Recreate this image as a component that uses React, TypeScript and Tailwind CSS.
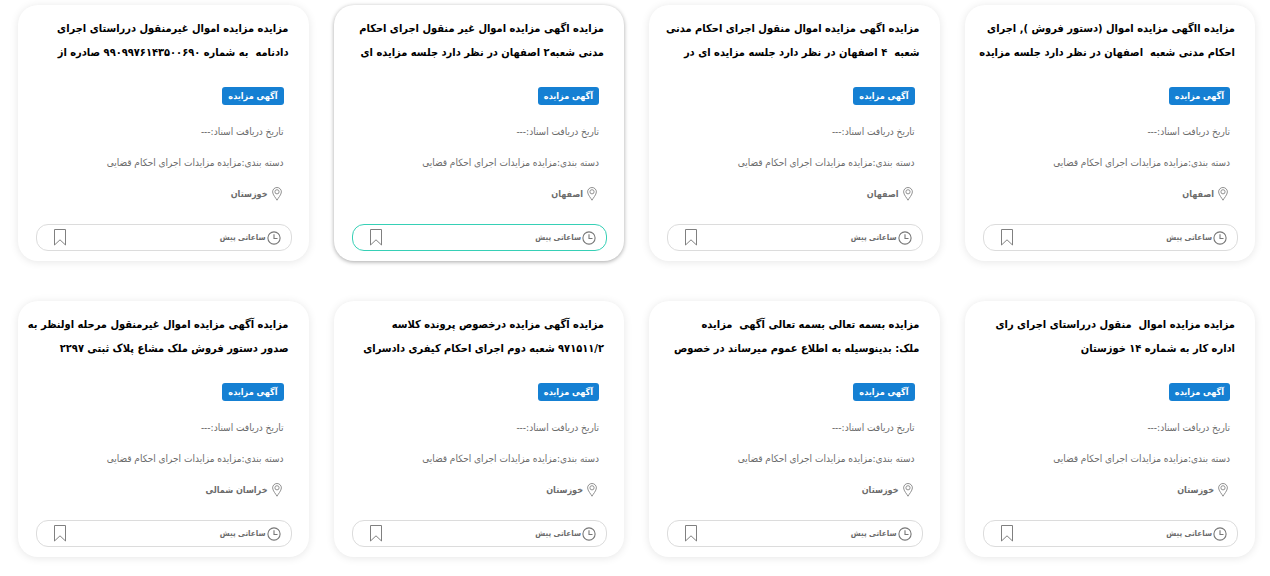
type Auction = {
  title: [string, string];
  place: string;
  active?: boolean;
};

const auctions: Auction[] = [
  { title: ["مزایده ااگهی مزایده اموال (دستور فروش ), اجرای", "احکام مدنی شعبه  اصفهان در نظر دارد جلسه مزایده"], place: "اصفهان" },
  { title: ["مزایده اگهی مزایده اموال منقول اجرای احکام مدنی", "شعبه  ۴ اصفهان در نظر دارد جلسه مزایده ای در"], place: "اصفهان" },
  { title: ["مزایده اگهی مزایده اموال غیر منقول اجرای احکام", "مدنی شعبه۲ اصفهان در نظر دارد جلسه مزایده ای"], place: "اصفهان", active: true },
  { title: ["مزایده مزایده اموال غیرمنقول درراستای اجرای", "دادنامه  به شماره ۹۹۰۹۹۷۶۱۴۳۵۰۰۶۹۰ صادره از"], place: "خوزستان" },
  { title: ["مزایده مزایده اموال  منقول درراستای اجرای رای", "اداره کار به شماره ۱۴ خوزستان"], place: "خوزستان" },
  { title: ["مزایده بسمه تعالی بسمه تعالی آگهی  مزایده", "ملک: بدینوسیله به اطلاع عموم میرساند در خصوص"], place: "خوزستان" },
  { title: ["مزایده آگهی مزایده درخصوص پرونده کلاسه", "۹۷۱۵۱۱/۲ شعبه دوم اجرای احکام کیفری دادسرای"], place: "خوزستان" },
  { title: ["مزایده آگهی مزایده اموال غیرمنقول مرحله اولنظر به", "صدور دستور فروش ملک مشاع پلاک ثبتی ۲۲۹۷"], place: "خراسان شمالی" },
];

function PinIcon() {
  return (
    <svg viewBox="0 0 10 14" className="h-3.5 w-2.5 shrink-0" fill="none" stroke="#858585" strokeWidth="0.9" aria-hidden="true">
      <path d="M5 13.2C4.2 11.5.6 7.6.6 4.9a4.4 4.4 0 0 1 8.8 0C9.4 7.6 5.8 11.5 5 13.2Z" />
      <circle cx="5" cy="4.8" r="2.1" />
    </svg>
  );
}

function ClockIcon() {
  return (
    <svg viewBox="0 0 14 14" className="size-3.5 shrink-0" fill="none" stroke="#777" strokeWidth="1.1" aria-hidden="true">
      <circle cx="7" cy="7" r="6.1" />
      <path d="M7 3.2V7.5H10.5" />
    </svg>
  );
}

function BookmarkIcon() {
  return (
    <svg viewBox="0 0 12 17" className="h-[17px] w-3" fill="none" stroke="#808080" strokeWidth="1" aria-hidden="true">
      <path d="M.5 .5H11.5V16L6 10.8L.5 16Z" />
    </svg>
  );
}

function AuctionCard({ title, place, active }: Auction) {
  return (
    <article
      className={`flex min-w-0 flex-col rounded-[20px] bg-white pt-3 pr-[17px] pb-2.5 pl-[18px] ${
        active ? "shadow-[0_1px_4px_rgba(0,0,0,0.35)]" : "shadow-[0_1px_8px_rgba(0,0,0,0.1)]"
      }`}
    >
      <h2 className="-ml-4 pr-[3px] text-[11px] leading-6 font-bold whitespace-pre text-black">
        <a href="#">
          {title[0]}
          <br />
          {title[1]}
        </a>
      </h2>
      <div className="flex flex-col items-start pt-[22px] pr-2 text-[10px] text-[#6b6b6b]">
        <span className="rounded-[3px] bg-[#1580d3] px-1.5 text-[9px] leading-[18px] font-bold text-white">آگهی مزایده</span>
        <p className="mt-4 leading-[22px]">تاریخ دریافت اسناد:---</p>
        <p className="mt-[9px] leading-[22px]">دسته بندی:مزایده مزایدات اجرای احکام قضایی</p>
        <p className="mt-[9px] flex items-center gap-1 pr-0.5 text-[9px] leading-[22px] font-bold">
          <PinIcon />
          {place}
        </p>
      </div>
      <footer
        className={`mt-[19px] flex h-[27px] items-center justify-between rounded-[12px] border pr-2.5 pl-[17px] ${
          active ? "border-[#36d0b6]" : "border-[#dcdcdc]"
        }`}
      >
        <span className="flex items-center gap-px text-[8px] font-bold text-[#6b6b6b]">
          <ClockIcon />
          ساعاتی پیش
        </span>
        <button type="button" aria-label="نشان کردن" className="flex">
          <BookmarkIcon />
        </button>
      </footer>
    </article>
  );
}

export default function App() {
  return (
    <main dir="rtl" className="bg-white pt-[5px] pr-[15px] pb-[19px] pl-[18px] font-['DejaVu_Sans_Condensed','DejaVu_Sans',sans-serif]">
      <section className="grid grid-cols-4 gap-x-[25px] gap-y-10">
        {auctions.map((auction, index) => (
          <AuctionCard key={index} {...auction} />
        ))}
      </section>
    </main>
  );
}
